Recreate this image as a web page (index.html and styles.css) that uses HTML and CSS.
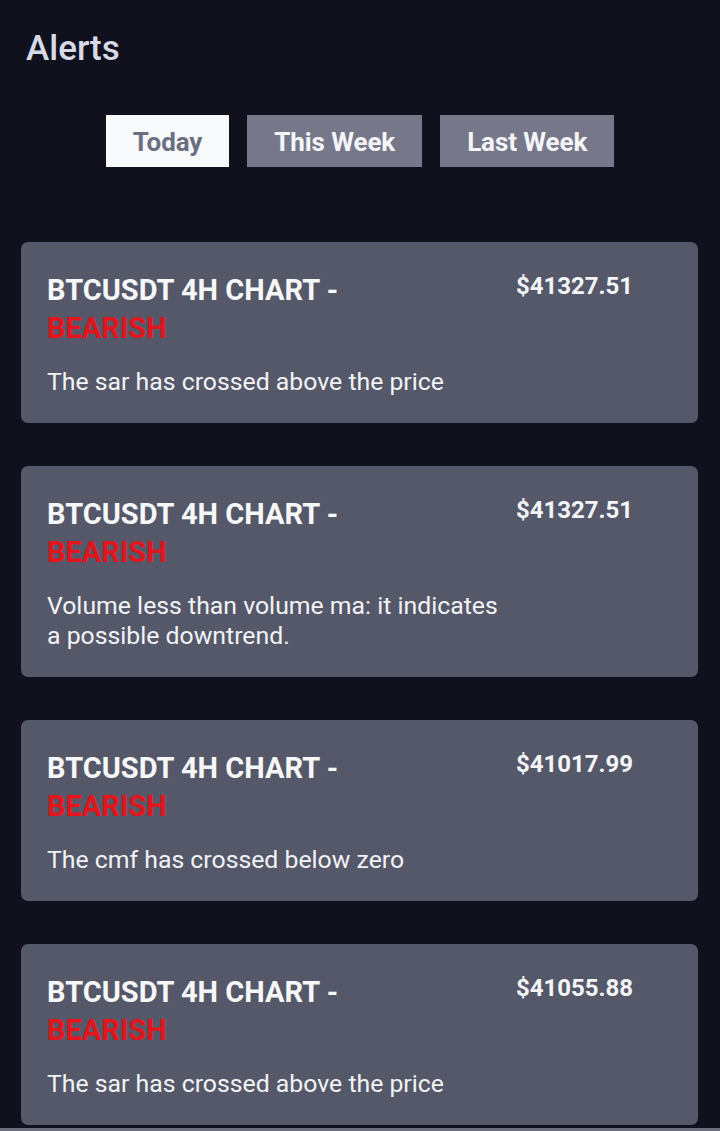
FILE: index.html
```html
<!DOCTYPE html>
<html>
<head>
<meta charset="utf-8">
<link rel="stylesheet" href="styles.css">
</head>
<body>
<div class="page">
  <h1 class="title">Alerts</h1>
  <div class="tabs">
    <div class="tab active">Today</div>
    <div class="tab">This Week</div>
    <div class="tab">Last Week</div>
  </div>
  <div class="list">
    <div class="card">
      <div class="head">
        <div class="name">BTCUSDT 4H CHART -<br><span class="bear">BEARISH</span></div>
        <div class="price">$41327.51</div>
      </div>
      <div class="desc">The sar has crossed above the price</div>
    </div>
    <div class="card">
      <div class="head">
        <div class="name">BTCUSDT 4H CHART -<br><span class="bear">BEARISH</span></div>
        <div class="price">$41327.51</div>
      </div>
      <div class="desc">Volume less than volume ma: it indicates<br>a possible downtrend.</div>
    </div>
    <div class="card">
      <div class="head">
        <div class="name">BTCUSDT 4H CHART -<br><span class="bear">BEARISH</span></div>
        <div class="price">$41017.99</div>
      </div>
      <div class="desc">The cmf has crossed below zero</div>
    </div>
    <div class="card">
      <div class="head">
        <div class="name">BTCUSDT 4H CHART -<br><span class="bear">BEARISH</span></div>
        <div class="price">$41055.88</div>
      </div>
      <div class="desc">The sar has crossed above the price</div>
    </div>
  </div>
  <div class="bottom-line"></div>
</div>
</body>
</html>
```
FILE: styles.css
```css
html, body {
  margin: 0;
  padding: 0;
  background: #11111d;
  font-family: Roboto, "Liberation Sans", sans-serif;
}
.page {
  width: 720px;
  height: 1131px;
  overflow: hidden;
  display: flex;
  flex-direction: column;
}
.title {
  margin: 0;
  padding: 29px 0 0 26px;
  font-size: 35px;
  font-weight: 500;
  line-height: 40px;
  color: #d6dae6;
}
.tabs {
  display: flex;
  justify-content: center;
  gap: 18px;
  margin-top: 46px;
}
.tab {
  height: 52px;
  box-sizing: border-box;
  display: flex;
  align-items: center;
  justify-content: center;
  padding: 2px 27px 0;
  font-size: 26px;
  font-weight: 700;
  color: #f4f5f8;
  background: #767889;
  letter-spacing: -0.1px;
}
.tab.active {
  background: #f8f9fb;
  color: #6c6f82;
}
.list {
  display: flex;
  flex-direction: column;
  gap: 43px;
  margin: 75px 22px 0 21px;
}
.card {
  background: #555869;
  border-radius: 7px;
  padding: 29px 26px 26px 26px;
}
.head {
  display: flex;
  justify-content: space-between;
}
.name {
  font-size: 29px;
  font-weight: 700;
  line-height: 38px;
  color: #f6f7f9;
}
.bear {
  color: #e3141c;
}
.price {
  font-size: 24px;
  font-weight: 700;
  color: #f4f5f8;
  line-height: 32px;
  margin-right: 39px;
  margin-top: -1px;
}
.desc {
  margin-top: 20px;
  font-size: 24.8px;
  line-height: 30px;
  color: #f2f3f6;
}
.bottom-line {
  margin-top: 3px;
  height: 4px;
  background: #6d6f7e;
}
```
